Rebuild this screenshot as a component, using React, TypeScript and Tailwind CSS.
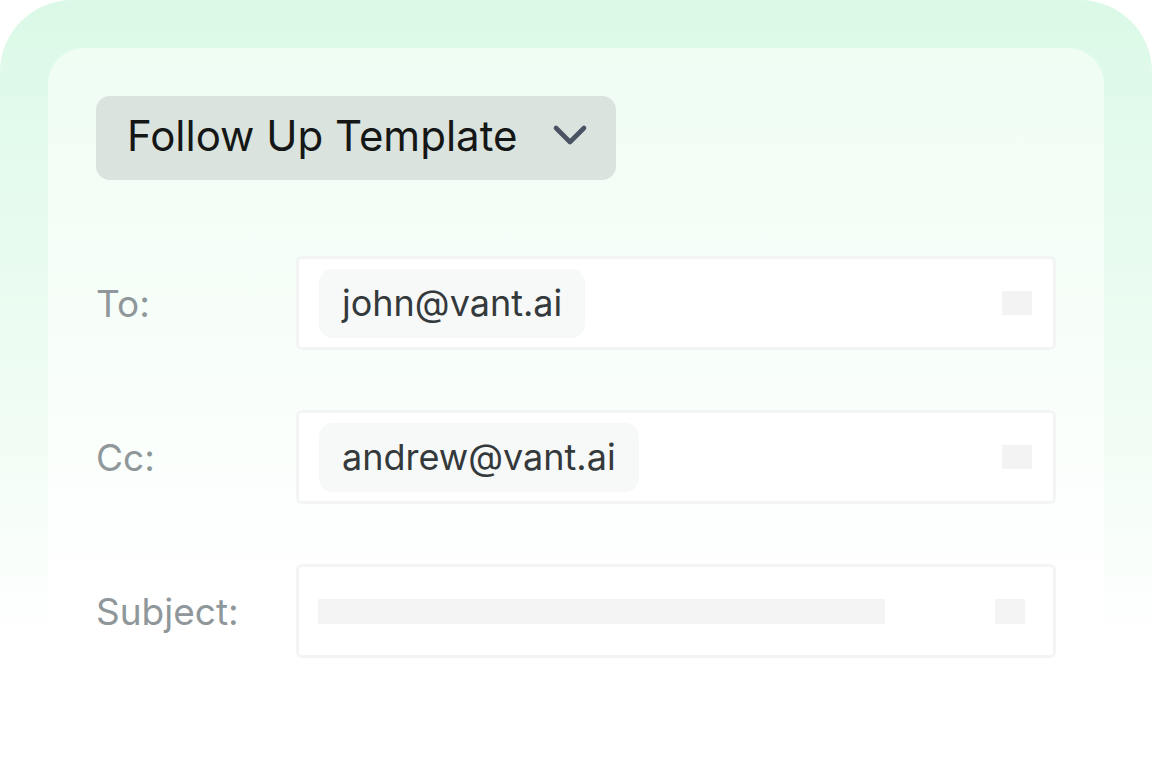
function Field({ label, value }: { label: string; value?: string }) {
  return (
    <div className="flex items-center">
      <div className="w-[200px] text-[37px] text-[#8f979a] leading-none">{label}</div>
      <div
        className={
          value
            ? "flex h-[94px] w-[760px] items-center justify-between rounded-[6px] border-[3px] border-[#f3f5f5] bg-white pl-[20px] pr-[21px]"
            : "flex h-[94px] w-[760px] items-center justify-between rounded-[6px] border-[3px] border-[#f3f5f5] bg-white pl-[19px] pr-[28px]"
        }
      >
        {value ? (
          <div className="flex h-[69px] items-center rounded-[14px] bg-[#f7f8f8] px-[23px] text-[36px] text-[#343a3c]">
            {value}
          </div>
        ) : (
          <div className="h-[25px] w-[567px] bg-[#f4f4f4]" />
        )}
        <div className={value ? "h-[24px] w-[30px] bg-[#f3f3f3]" : "h-[25px] w-[30px] bg-[#f4f4f4]"} />
      </div>
    </div>
  );
}

export default function App() {
  return (
    <div
      className="h-[771px] w-[1152px] overflow-hidden bg-white"
      style={{ fontFamily: "Inter, 'Noto Sans', sans-serif" }}
    >
      <div className="h-full rounded-t-[72px] bg-gradient-to-b from-[#dbf9e7] via-[#f3fdf6] via-60% to-white to-[84%] px-12 pt-12">
        <div className="h-full rounded-t-[36px] bg-gradient-to-b from-[#effdf3] to-white to-[78%] px-12 pt-12">
          <button
            type="button"
            className="flex h-[84px] w-[520px] items-center rounded-[14px] bg-[#dae3dd] pl-[31px] pr-[28px] text-[42px] text-[#151716]"
          >
            <span className="mt-[-5px] flex-1 text-left">Follow Up Template</span>
            <svg width="36" height="24" viewBox="0 0 36 24" fill="none" className="mt-[-6px]">
              <path
                d="M4 5 L18 19 L32 5"
                stroke="#4a5363"
                strokeWidth="4.6"
                strokeLinecap="round"
                strokeLinejoin="round"
              />
            </svg>
          </button>

          <div className="mt-[76px] flex flex-col gap-[60px]">
            <Field label="To:" value="john@vant.ai" />
            <Field label="Cc:" value="andrew@vant.ai" />
            <Field label="Subject:" />
          </div>
        </div>
      </div>
    </div>
  );
}
